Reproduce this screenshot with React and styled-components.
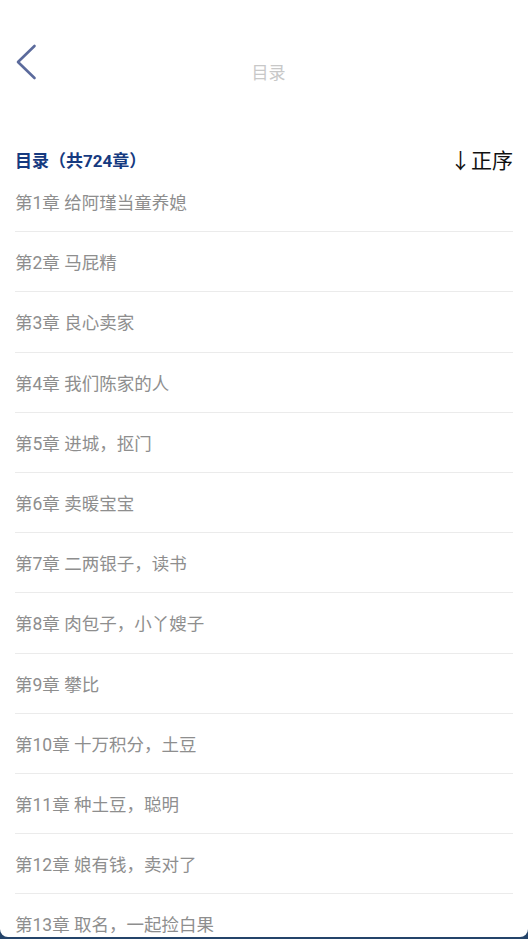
import React from 'react'
import styled, { createGlobalStyle } from 'styled-components'

const chapters = [
  '第1章 给阿瑾当童养媳',
  '第2章 马屁精',
  '第3章 良心卖家',
  '第4章 我们陈家的人',
  '第5章 进城，抠门',
  '第6章 卖暖宝宝',
  '第7章 二两银子，读书',
  '第8章 肉包子，小丫嫂子',
  '第9章 攀比',
  '第10章 十万积分，土豆',
  '第11章 种土豆，聪明',
  '第12章 娘有钱，卖对了',
  '第13章 取名，一起捡白果',
  '第14章 白果',
]

const App = () => {
  return (
    <>
      <GlobalStyle />
      <Screen>
        <TopBar>
          <BackButton>
            <svg width="24" height="36" viewBox="0 0 24 36">
              <path d="M19.5 2 L3 18 L19.5 34" fill="none" stroke="#5b6a9c" strokeWidth="2.6" strokeLinecap="round" strokeLinejoin="round" />
            </svg>
          </BackButton>
          <Title>目录</Title>
        </TopBar>
        <ListHead>
          <Count>目录（共724章）</Count>
          <Order>↓正序</Order>
        </ListHead>
        <List>
          {chapters.map((c) => (
            <Item key={c}>{c}</Item>
          ))}
        </List>
      </Screen>
    </>
  )
}

export default App

const GlobalStyle = createGlobalStyle`
  html, body {
    margin: 0;
    padding: 0;
    background: #24446a;
    height: 939px;
    overflow: hidden;
  }
  body {
    font-family: Roboto, "Noto Sans CJK SC", sans-serif;
  }
`
const Screen = styled.div`
  height: 937px;
  background: #fff;
  border-radius: 0 0 8px 8px;
  overflow: hidden;
  padding: 0 15px;
  box-sizing: border-box;
`
const TopBar = styled.div`
  position: relative;
  height: 146px;
  display: flex;
  justify-content: center;
`
const BackButton = styled.div`
  position: absolute;
  left: 0;
  top: 44px;
  width: 24px;
  height: 36px;
`
const Title = styled.div`
  margin-top: 61px;
  padding-left: 9px;
  font-size: 17px;
  line-height: 24px;
  color: #c8c8c8;
`
const ListHead = styled.div`
  display: flex;
  justify-content: space-between;
  align-items: center;
  height: 26px;
`
const Count = styled.div`
  font-size: 17px;
  font-weight: 700;
  color: #163a80;
`
const Order = styled.div`
  font-size: 21px;
  color: #111;
`
const List = styled.div`
  display: flex;
  flex-direction: column;
`
const Item = styled.div`
  flex: none;
  height: 59.2px;
  display: flex;
  align-items: center;
  border-bottom: 1px solid #ebebeb;
  font-size: 17.5px;
  color: #8e8e8e;
`
